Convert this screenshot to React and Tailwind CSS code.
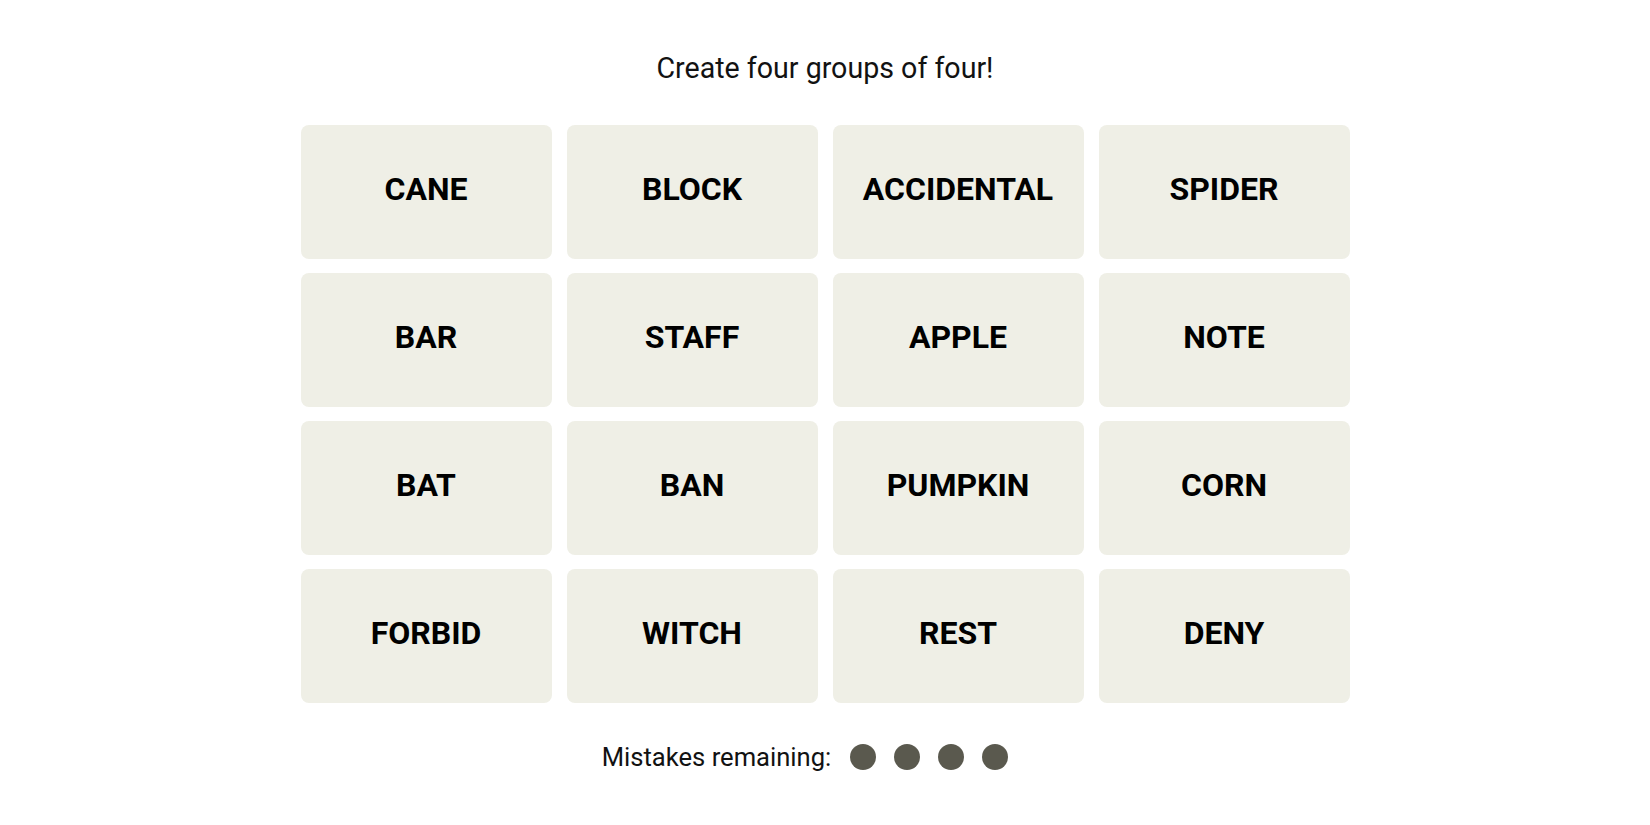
import React from "react";

const words = [
  "CANE", "BLOCK", "ACCIDENTAL", "SPIDER",
  "BAR", "STAFF", "APPLE", "NOTE",
  "BAT", "BAN", "PUMPKIN", "CORN",
  "FORBID", "WITCH", "REST", "DENY",
];

const App = () => {
  return (
    <div className="min-h-screen bg-white flex flex-col items-center pt-[51px] font-['Roboto',_'Liberation_Sans',_sans-serif]">
      <h1 className="text-[28.6px] leading-[34px] text-[#121212] font-normal">Create four groups of four!</h1>

      <div className="mt-[40px] grid grid-cols-[repeat(4,251px)] auto-rows-[134px] gap-x-[15px] gap-y-[14px]">
        {words.map(word => (
          <div
            key={word}
            className="bg-[#efefe6] rounded-lg flex items-center justify-center pb-[6px] text-[32px] font-bold text-black"
          >
            {word}
          </div>
        ))}
      </div>

      <div className="mt-[41px] flex items-center pr-[40px]">
        <span className="text-[25.6px] leading-[26px] text-[#121212] mr-[19px]">Mistakes remaining:</span>
        <div className="flex gap-[18px]">
          {[0, 1, 2, 3].map(i => (
            <span key={i} className="w-[26px] h-[26px] rounded-full bg-[#5a594e]" />
          ))}
        </div>
      </div>
    </div>
  );
};

export default App;
